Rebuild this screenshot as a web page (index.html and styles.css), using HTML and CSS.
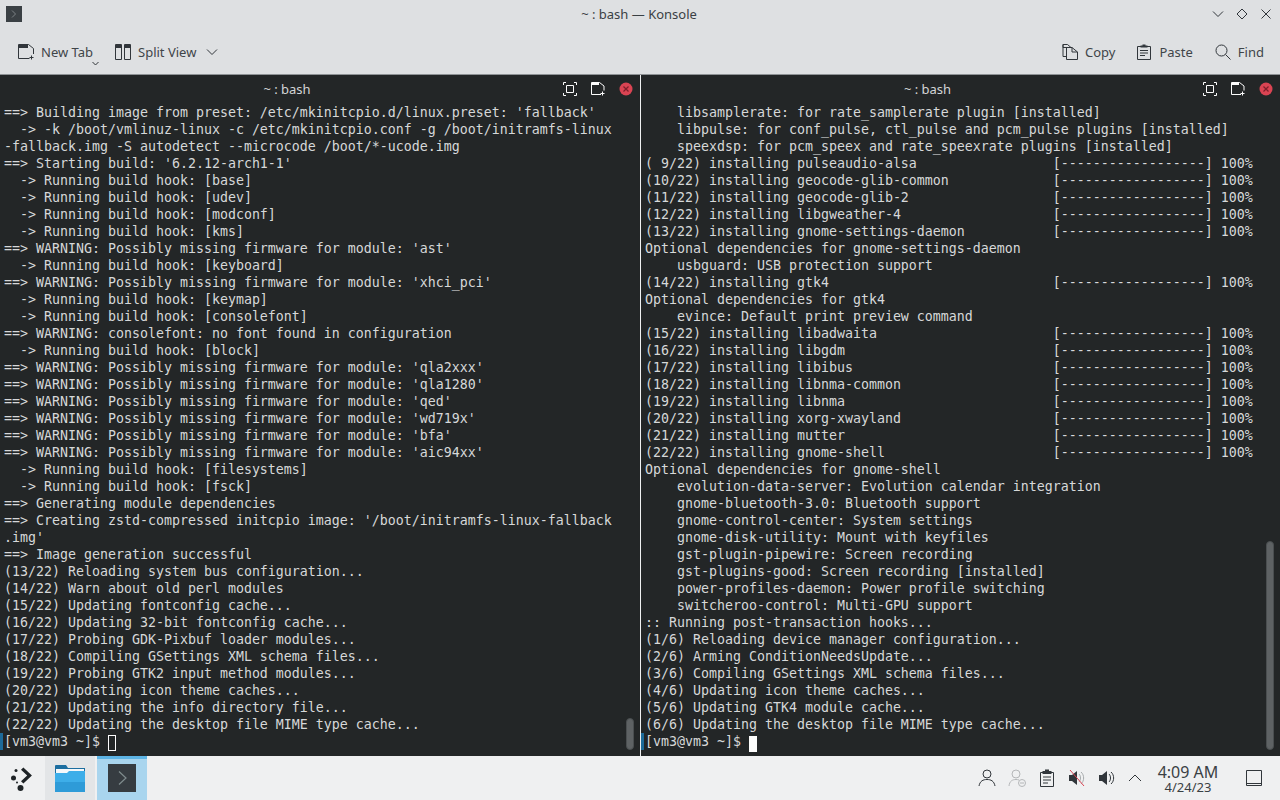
FILE: index.html
```html
<!DOCTYPE html>
<html lang="en">
<head>
<meta charset="utf-8">
<title>~ : bash — Konsole</title>
<link rel="stylesheet" href="styles.css">
</head>
<body>
<div class="window">
  <header class="titlebar">
    <div class="app-icon"><svg width="16" height="16" viewBox="0 0 16 16"><path d="M6 4.5 9.5 8 6 11.5" fill="none" stroke="#7c8285" stroke-width="1"/></svg></div>
    <div class="win-title">~ : bash — Konsole</div>
    <div class="win-buttons">
      <svg width="12" height="12" viewBox="0 0 12 12"><path d="M1 3.5 6 8.5 11 3.5" class="ln"/></svg>
      <svg width="12" height="12" viewBox="0 0 12 12"><path d="M6 1 11 6 6 11 1 6Z" class="ln"/></svg>
      <svg width="12" height="12" viewBox="0 0 12 12"><path d="M1.5 1.5 10.500 10.500M10.500 1.500 1.500 10.500" class="ln"/></svg>
    </div>
  </header>
  <nav class="toolbar">
    <div class="tool tool-newtab">
      <svg width="16" height="16" viewBox="0 0 16 16"><path d="M11.500 14.500H.5V.5H10.500L15.500 4.500V10M13.500 11.500V15.500M11.500 13.500H15.500" class="ln"/><path d="M1 1H10V4H1Z" fill="#31363b"/></svg>
      <span>New Tab</span>
      <svg class="mini-chev" width="7" height="5" viewBox="0 0 7 5"><path d="M.5 1 3.500 4 6.500 1" class="ln"/></svg>
    </div>
    <div class="tool tool-split">
      <svg width="16" height="16" viewBox="0 0 16 16"><path d="M.5.5H6.500V15.500H.5ZM9.500.5H15.500V15.500H9.500Z" class="ln"/><path d="M1 1H6V4H1ZM10 1H15V4H10Z" fill="#31363b"/></svg>
      <span>Split View</span>
      <svg class="chev" width="12" height="8" viewBox="0 0 12 8"><path d="M1 1.500 6 6.500 11 1.500" class="ln"/></svg>
    </div>
    <div class="spacer"></div>
    <div class="tool tool-copy">
      <svg width="16" height="16" viewBox="0 0 16 16"><path d="M5.500 3.500H1V.5H5.500L9 3.500M4.500 15.500V3.500H10L15.500 8V15.500ZM1 .5V12.500H4.500M10 3.500V8H15.500" class="ln"/></svg>
      <span>Copy</span>
    </div>
    <div class="tool tool-paste">
      <svg width="16" height="16" viewBox="0 0 16 16"><path d="M1.500 2.500H14.500V15.500H1.500ZM4 6.500H12M4 9H12M4 11.500H9" class="ln"/><path d="M4.500 3.500V1.500H6.500V.5H9.500V1.500H11.500V3.500Z" fill="#31363b"/></svg>
      <span>Paste</span>
    </div>
    <div class="tool tool-find">
      <svg width="16" height="16" viewBox="0 0 16 16"><circle cx="6.500" cy="6.500" r="5.500" class="ln"/><path d="M10.500 10.500 15.500 15.500" class="ln"/></svg>
      <span>Find</span>
    </div>
  </nav>
  <main class="panes">
    <section class="pane pane-left">
      <div class="pane-head">
        <div class="pane-title">~ : bash</div>
        <div class="pane-actions">
          <svg width="14" height="14" viewBox="0 0 14 14"><path d="M.5 3V.5H3M11 .5H13.500V3M13.500 11V13.500H11M3 13.500H.5V11M3.500 3.500H10.500V10.500H3.500Z" class="lw"/></svg>
          <svg width="14" height="14" viewBox="0 0 14 14"><path d="M10 12.500H.5V.5H8.500L13 4V8.500M11.500 9.500V13.500M9.500 11.500H13.500" class="lw"/><path d="M1 1H8V3H1Z" fill="#fcfcfc"/></svg>
          <svg width="14" height="14" viewBox="0 0 14 14"><circle cx="7" cy="7" r="6.500" fill="#da4453"/><path d="M4.500 4.500 9.500 9.500M9.500 4.500 4.500 9.500" stroke="#7d1f2b" stroke-width="1.200" fill="none"/></svg>
        </div>
      </div>
      <pre class="term">==&gt; Building image from preset: /etc/mkinitcpio.d/linux.preset: 'fallback'
  -&gt; -k /boot/vmlinuz-linux -c /etc/mkinitcpio.conf -g /boot/initramfs-linux
-fallback.img -S autodetect --microcode /boot/*-ucode.img
==&gt; Starting build: '6.2.12-arch1-1'
  -&gt; Running build hook: [base]
  -&gt; Running build hook: [udev]
  -&gt; Running build hook: [modconf]
  -&gt; Running build hook: [kms]
==&gt; WARNING: Possibly missing firmware for module: 'ast'
  -&gt; Running build hook: [keyboard]
==&gt; WARNING: Possibly missing firmware for module: 'xhci_pci'
  -&gt; Running build hook: [keymap]
  -&gt; Running build hook: [consolefont]
==&gt; WARNING: consolefont: no font found in configuration
  -&gt; Running build hook: [block]
==&gt; WARNING: Possibly missing firmware for module: 'qla2xxx'
==&gt; WARNING: Possibly missing firmware for module: 'qla1280'
==&gt; WARNING: Possibly missing firmware for module: 'qed'
==&gt; WARNING: Possibly missing firmware for module: 'wd719x'
==&gt; WARNING: Possibly missing firmware for module: 'bfa'
==&gt; WARNING: Possibly missing firmware for module: 'aic94xx'
  -&gt; Running build hook: [filesystems]
  -&gt; Running build hook: [fsck]
==&gt; Generating module dependencies
==&gt; Creating zstd-compressed initcpio image: '/boot/initramfs-linux-fallback
.img'
==&gt; Image generation successful
(13/22) Reloading system bus configuration...
(14/22) Warn about old perl modules
(15/22) Updating fontconfig cache...
(16/22) Updating 32-bit fontconfig cache...
(17/22) Probing GDK-Pixbuf loader modules...
(18/22) Compiling GSettings XML schema files...
(19/22) Probing GTK2 input method modules...
(20/22) Updating icon theme caches...
(21/22) Updating the info directory file...
(22/22) Updating the desktop file MIME type cache...
[vm3@vm3 ~]$ <span class="cursor cursor-hollow"> </span></pre>
      <div class="prompt-mark"></div>
      <div class="scroll-thumb thumb-left"></div>
    </section>
    <div class="divider"></div>
    <section class="pane pane-right">
      <div class="pane-head">
        <div class="pane-title">~ : bash</div>
        <div class="pane-actions">
          <svg width="14" height="14" viewBox="0 0 14 14"><path d="M.5 3V.5H3M11 .5H13.500V3M13.500 11V13.500H11M3 13.500H.5V11M3.500 3.500H10.500V10.500H3.500Z" class="lw"/></svg>
          <svg width="14" height="14" viewBox="0 0 14 14"><path d="M10 12.500H.5V.5H8.500L13 4V8.500M11.500 9.500V13.500M9.500 11.500H13.500" class="lw"/><path d="M1 1H8V3H1Z" fill="#fcfcfc"/></svg>
          <svg width="14" height="14" viewBox="0 0 14 14"><circle cx="7" cy="7" r="6.500" fill="#da4453"/><path d="M4.500 4.500 9.500 9.500M9.500 4.500 4.500 9.500" stroke="#7d1f2b" stroke-width="1.200" fill="none"/></svg>
        </div>
      </div>
      <pre class="term">    libsamplerate: for rate_samplerate plugin [installed]
    libpulse: for conf_pulse, ctl_pulse and pcm_pulse plugins [installed]
    speexdsp: for pcm_speex and rate_speexrate plugins [installed]
( 9/22) installing pulseaudio-alsa                 [------------------] 100%
(10/22) installing geocode-glib-common             [------------------] 100%
(11/22) installing geocode-glib-2                  [------------------] 100%
(12/22) installing libgweather-4                   [------------------] 100%
(13/22) installing gnome-settings-daemon           [------------------] 100%
Optional dependencies for gnome-settings-daemon
    usbguard: USB protection support
(14/22) installing gtk4                            [------------------] 100%
Optional dependencies for gtk4
    evince: Default print preview command
(15/22) installing libadwaita                      [------------------] 100%
(16/22) installing libgdm                          [------------------] 100%
(17/22) installing libibus                         [------------------] 100%
(18/22) installing libnma-common                   [------------------] 100%
(19/22) installing libnma                          [------------------] 100%
(20/22) installing xorg-xwayland                   [------------------] 100%
(21/22) installing mutter                          [------------------] 100%
(22/22) installing gnome-shell                     [------------------] 100%
Optional dependencies for gnome-shell
    evolution-data-server: Evolution calendar integration
    gnome-bluetooth-3.0: Bluetooth support
    gnome-control-center: System settings
    gnome-disk-utility: Mount with keyfiles
    gst-plugin-pipewire: Screen recording
    gst-plugins-good: Screen recording [installed]
    power-profiles-daemon: Power profile switching
    switcheroo-control: Multi-GPU support
:: Running post-transaction hooks...
(1/6) Reloading device manager configuration...
(2/6) Arming ConditionNeedsUpdate...
(3/6) Compiling GSettings XML schema files...
(4/6) Updating icon theme caches...
(5/6) Updating GTK4 module cache...
(6/6) Updating the desktop file MIME type cache...
[vm3@vm3 ~]$ <span class="cursor cursor-solid"> </span></pre>
      <div class="prompt-mark"></div>
      <div class="scroll-thumb thumb-right"></div>
    </section>
  </main>
  <footer class="taskbar">
    <div class="launcher">
      <svg width="26" height="26" viewBox="0 0 26 26" fill="#1e2326"><path d="M12.500 2 21.500 10.500 12.500 19 10 16.500 16.500 10.500 10 4.500Z" transform="translate(2.500 .5) scale(.95)"/><circle cx="7" cy="5.500" r="1.500"/><circle cx="4.500" cy="13" r="2.500"/><circle cx="8" cy="17.500" r="1"/><circle cx="11.500" cy="23" r="3"/></svg>
    </div>
    <div class="task task-files">
      <svg width="30" height="28" viewBox="0 0 30 28"><path d="M0 2a1 1 0 0 1 1-1H11L13 4H30V28H0Z" fill="#1c6ea0"/><path d="M1 5H29V9H1Z" fill="#f4f8fb"/><path d="M0 9H12L14 7H30V28H0Z" fill="#3daee9"/><path d="M0 18H30V28H0Z" fill="#2e9bd8"/></svg>
    </div>
    <div class="task task-konsole">
      <svg width="28" height="28" viewBox="0 0 28 28"><rect width="28" height="28" fill="#363c41"/><path d="M11 7.500 18 14 11 20.500" fill="none" stroke="#7f8c8d" stroke-width="1.200"/></svg>
    </div>
    <div class="spacer"></div>
    <div class="tray">
      <div class="tray-cell"><svg width="18" height="18" viewBox="0 0 18 18"><circle cx="9" cy="5" r="4" class="ln"/><path d="M1 17C2 12 5 10.500 9 10.500S16 12 17 17" class="ln"/></svg></div>
      <div class="tray-cell faded"><svg width="18" height="18" viewBox="0 0 18 18"><circle cx="8" cy="5" r="4" class="ln"/><path d="M1 17C1.500 12 4.500 10.500 8 10.500 9 10.500 10 10.600 11 11" class="ln"/><circle cx="14" cy="14" r="3.500" class="ln"/><path d="M12 14H16" class="ln"/></svg></div>
      <div class="tray-cell"><svg width="16" height="18" viewBox="0 0 16 18"><path d="M1.500 3.500H14.500V17.500H1.500ZM4 8H12M4 11H12M4 14H9" class="ln"/><path d="M3.500 5V2H6V.5H10V2H12.500V5Z" fill="#31363b"/></svg></div>
      <div class="tray-cell"><svg width="18" height="18" viewBox="0 0 18 18"><path d="M1 6H4L9 2V16L4 12H1Z" fill="#31363b"/><path d="M11 5C13 7 13 11 11 13M13 3C16.500 6 16.500 12 13 15" fill="none" stroke="#a7abad" stroke-width="1"/><path d="M2 1 16 17" stroke="#da4453" stroke-width="1"/></svg></div>
      <div class="tray-cell"><svg width="18" height="18" viewBox="0 0 18 18"><path d="M1 6H4L9 2V16L4 12H1Z" fill="#31363b"/><path d="M11 5C13 7 13 11 11 13M13 3C16.500 6 16.500 12 13 15" fill="none" stroke="#31363b" stroke-width="1"/></svg></div>
      <div class="tray-cell tray-chev"><svg width="14" height="8" viewBox="0 0 14 8"><path d="M1 7 7 1 13 7" class="ln"/></svg></div>
    </div>
    <div class="clock">
      <div class="clock-time">4:09 AM</div>
      <div class="clock-date">4/24/23</div>
    </div>
    <div class="show-desktop">
      <svg width="16" height="16" viewBox="0 0 16 16"><path d="M.5.5H15.500V15.500H.5ZM1 13.500H15" class="ln"/></svg>
    </div>
  </footer>
</div>
</body>
</html>
```
FILE: styles.css
```css
* { box-sizing: border-box; }
html, body { margin: 0; padding: 0; }
body {
  width: 1280px;
  height: 800px;
  overflow: hidden;
  font-family: "Noto Sans", sans-serif;
  color: #31363b;
  background: #232627;
}
svg { display: block; flex: none; }
.ln { fill: none; stroke: #31363b; stroke-width: 1; }
.lw { fill: none; stroke: #fcfcfc; stroke-width: 1; }
.window { display: flex; flex-direction: column; height: 800px; }

.titlebar {
  height: 28px;
  background: #dee0e2;
  display: grid;
  grid-template-columns: 1fr auto 1fr;
  align-items: center;
  padding: 0 8px 0 6px;
}
.app-icon {
  width: 16px;
  height: 16px;
  background: #3a4044;
  justify-self: start;
}
.win-title { font-size: 13px; color: #3a4044; }
.win-buttons {
  justify-self: end;
  display: flex;
  gap: 12px;
}

.toolbar {
  height: 47px;
  background: #dee0e2;
  border-bottom: 1px solid #8e9295;
  display: flex;
  align-items: center;
  padding: 2px 16px 0 18px;
  font-size: 13px;
  color: #3f4549;
}
.tool { display: flex; align-items: center; position: relative; }
.tool span { margin-left: 7px; }
.tool-newtab { margin-right: 22px; }
.mini-chev { position: absolute; right: -6px; bottom: -5px; }
.chev { margin-left: 10px; }
.spacer { flex: 1; }
.tool-copy { margin-right: 21px; }
.tool-paste { margin-right: 22px; }

.panes { height: 681px; display: flex; }
.pane { position: relative; flex: 1; min-width: 0; background: #232627; }
.pane-left { flex: 0 0 640px; }
.divider { flex: 0 0 1px; background: #eff0f1; }
.pane-head {
  height: 28px;
  display: flex;
  align-items: center;
  color: #d3d5d6;
  font-size: 13px;
}
.pane-title { flex: 1; text-align: center; }
.pane-actions {
  display: flex;
  gap: 14px;
  padding-right: 7px;
  width: 66px;
  flex: none;
  justify-content: flex-end;
}
.term {
  margin: 1px 0 0;
  padding-left: 4px;
  font-family: "DejaVu Sans Mono", monospace;
  font-size: 13.29px;
  line-height: 17px;
  color: #d6d8d9;
  white-space: pre;
}
.cursor { display: inline-block; width: 8px; height: 16px; vertical-align: -3px; }
.cursor-hollow { border: 1px solid #fcfcfc; }
.cursor-solid { background: #fcfcfc; }
.prompt-mark {
  position: absolute;
  left: 0;
  top: 658px;
  width: 3px;
  height: 17px;
  background: #1d6a99;
}
.scroll-thumb {
  position: absolute;
  right: 6px;
  width: 8px;
  border-radius: 4px;
  background: #5e6264;
  border: 1px solid #4a4e50;
}
.thumb-left { top: 643px; height: 32px; }
.thumb-right { top: 466px; height: 209px; }

.taskbar {
  height: 44px;
  background: #eff0f1;
  display: flex;
  align-items: stretch;
}
.launcher { width: 45px; display: flex; align-items: center; justify-content: center; padding-right: 2px; }
.task { width: 50px; display: flex; align-items: center; justify-content: center; }
.task-files { background: #e3e5e7; margin-right: 2px; }
.task-konsole { background: #a9d5ee; border-top: 3px solid #5db4e5; padding-bottom: 3px; }
.tray { display: flex; align-items: center; }
.tray-cell { width: 30px; display: flex; justify-content: center; }
.tray-cell.faded { opacity: .3; }
.tray-chev { margin-left: -2px; }
.clock { width: 76px; text-align: center; color: #3a4044; display: flex; flex-direction: column; justify-content: center; }
.clock-time { font-size: 16px; line-height: 17px; margin-top: 2px; }
.clock-date { font-size: 13px; line-height: 13px; }
.show-desktop { width: 54px; display: flex; align-items: center; justify-content: flex-end; padding-right: 18px; }
```
